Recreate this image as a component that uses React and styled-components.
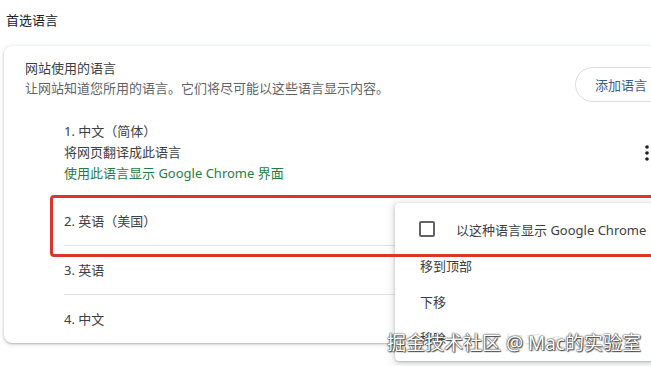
import React from "react";
import styled, { createGlobalStyle } from "styled-components";

const GlobalStyle = createGlobalStyle`
  html, body {
    margin: 0;
    padding: 0;
    background: #ffffff;
    overflow: hidden;
  }
  body {
    font-family: "Noto Sans", "Noto Sans CJK SC", sans-serif;
    color: #202124;
  }
`;

const languages = [
  { id: 1, name: "1. 中文（简体）", first: true },
  { id: 2, name: "2. 英语（美国）" },
  { id: 3, name: "3. 英语" },
  { id: 4, name: "4. 中文" },
];

const menuItems = ["移到顶部", "下移", "移除"];

const App = () => {
  return (
    <>
      <GlobalStyle />
      <Page>
        <Title>首选语言</Title>
        <Card>
          <Header>
            <HeaderText>
              <Label>网站使用的语言</Label>
              <Secondary>让网站知道您所用的语言。它们将尽可能以这些语言显示内容。</Secondary>
            </HeaderText>
            <AddButton>添加语言</AddButton>
          </Header>
          <List>
            {languages.map((lang) => (
              <Item key={lang.id} $first={lang.first}>
                <ItemText>
                  <ItemName>{lang.name}</ItemName>
                  {lang.first && (
                    <>
                      <ItemName>将网页翻译成此语言</ItemName>
                      <ItemLink>使用此语言显示 Google Chrome 界面</ItemLink>
                    </>
                  )}
                </ItemText>
                {lang.first && (
                  <MoreButton aria-label="更多操作">
                    <svg width="4" height="16" viewBox="0 0 4 16">
                      <circle cx="2" cy="2" r="1.8" fill="#202124" />
                      <circle cx="2" cy="8" r="1.8" fill="#202124" />
                      <circle cx="2" cy="14" r="1.8" fill="#202124" />
                    </svg>
                  </MoreButton>
                )}
              </Item>
            ))}
          </List>
        </Card>

        <Menu>
          <MenuRow $tall>
            <Checkbox />
            <span>以这种语言显示 Google Chrome</span>
          </MenuRow>
          {menuItems.map((m) => (
            <MenuRow key={m}>{m}</MenuRow>
          ))}
        </Menu>

        <Highlight />

        <GhostMark>知乎 @Mac</GhostMark>
        <Watermark>掘金技术社区 @ Mac的实验室</Watermark>
      </Page>
    </>
  );
};

const Page = styled.div`
  position: relative;
  width: 720px;
  height: 366px;
  padding-left: 4px;
  box-sizing: border-box;
`;

const Title = styled.div`
  padding: 10px 0 0 2px;
  font-size: 13px;
  line-height: 20px;
  color: #202124;
`;

const Card = styled.div`
  margin-top: 16px;
  width: 683px;
  background: #fff;
  border-radius: 8px;
  box-shadow: 0 1px 2px rgba(60, 64, 67, 0.3), 0 1px 4px 1px rgba(60, 64, 67, 0.12);
`;

const Header = styled.div`
  display: flex;
  align-items: flex-start;
  padding: 12px 20px 0 21px;
`;

const HeaderText = styled.div`
  display: flex;
  flex-direction: column;
  flex: 1;
`;

const Label = styled.div`
  font-size: 13px;
  line-height: 20px;
  color: #3c4043;
`;

const Secondary = styled.div`
  font-size: 13px;
  line-height: 20px;
  color: #5f6368;
`;

const AddButton = styled.button`
  margin-top: 9px;
  height: 35px;
  padding: 0 19px;
  border: 1px solid #dadce0;
  border-radius: 18px;
  background: #fff;
  color: #3c5a92;
  font-family: inherit;
  font-size: 13px;
`;

const List = styled.div`
  padding: 0 20px 0 60px;
`;

const Item = styled.div`
  display: flex;
  align-items: center;
  min-height: 48px;
  box-sizing: content-box;
  padding: ${(p) => (p.$first ? "19px 0 13px" : "0")};
  border-top: ${(p) => (p.$first ? "none" : "1px solid #e3e3e3")};

  &:nth-child(2) {
    border-top: none;
  }
`;

const ItemText = styled.div`
  flex: 1;
  display: flex;
  flex-direction: column;
`;

const ItemName = styled.div`
  font-size: 13px;
  line-height: 21px;
  color: #3c4043;
`;

const ItemLink = styled.div`
  font-size: 13px;
  line-height: 21px;
  color: #1e7e45;
`;

const MoreButton = styled.button`
  width: 40px;
  height: 40px;
  display: flex;
  align-items: center;
  justify-content: center;
  border: none;
  background: transparent;
  padding: 0;
`;

const Menu = styled.div`
  position: absolute;
  left: 395px;
  top: 203px;
  width: 300px;
  padding: 8px 0 6px;
  background: #fff;
  border-radius: 4px;
  box-shadow: 0 1px 3px rgba(60, 64, 67, 0.3), 0 2px 8px 2px rgba(60, 64, 67, 0.15);
`;

const MenuRow = styled.div`
  display: flex;
  align-items: center;
  gap: 21px;
  height: 36px;
  padding-left: ${(p) => (p.$tall ? "24px" : "25px")};
  font-size: 13px;
  color: #3c4043;
`;

const Checkbox = styled.span`
  width: 12px;
  height: 12px;
  border: 2px solid #5f6368;
  border-radius: 2px;
  flex-shrink: 0;
`;

const Highlight = styled.div`
  position: absolute;
  left: 50px;
  top: 195px;
  width: 640px;
  height: 62px;
  box-sizing: border-box;
  border: 3px solid #d8382c;
  border-radius: 4px;
  pointer-events: none;
`;

const GhostMark = styled.div`
  position: absolute;
  left: 505px;
  top: 331px;
  font-size: 19px;
  line-height: 24px;
  color: rgba(200, 200, 200, 0.4);
  white-space: nowrap;
`;

const Watermark = styled.div`
  position: absolute;
  left: 387px;
  top: 331px;
  font-size: 19px;
  line-height: 24px;
  color: #fff;
  white-space: nowrap;
  text-shadow: 0 0 1px #333, 0 0 2px #333, 1px 1px 1px #555;
`;

export default App;
